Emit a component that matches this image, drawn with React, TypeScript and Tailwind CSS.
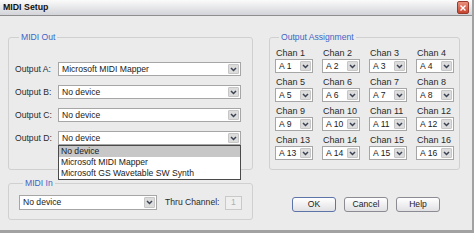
import clsx from "clsx";

// MIDI Setup dialog — XP-ish window with MIDI Out / MIDI In groups,
// the 16-channel output assignment grid and OK / Cancel / Help.

const outputs = [
  { label: "Output A:", value: "Microsoft MIDI Mapper" },
  { label: "Output B:", value: "No device" },
  { label: "Output C:", value: "No device" },
  { label: "Output D:", value: "No device" },
];

const devices = ["No device", "Microsoft MIDI Mapper", "Microsoft GS Wavetable SW Synth"];

const channels = Array.from({ length: 16 }, (_, i) => i + 1);

function Chevron() {
  return (
    <svg width="7" height="5" viewBox="0 0 7 5">
      <path d="M1 1l2.5 2.5L6 1" stroke="#3b4253" strokeWidth="1.5" fill="none" />
    </svg>
  );
}

function Select({ value, className }: { value: string; className?: string }) {
  return (
    <div className={clsx("flex h-[14px] items-stretch border border-[#a6a6a6] bg-white", className)}>
      <span className="flex-1 truncate pl-[3px] leading-[12px] text-[#1a1a1a]">{value}</span>
      <span className="m-px flex w-[11px] items-center justify-center rounded-[1px] border border-[#c6c6c6] bg-[#dcdcdc]">
        <Chevron />
      </span>
    </div>
  );
}

function Button({ label, primary }: { label: string; primary?: boolean }) {
  return (
    <button
      className={clsx(
        "h-[15px] w-[44px] rounded-[3px] border bg-gradient-to-b from-[#ffffff] to-[#e1e1e4] leading-[13px] text-[#222]",
        primary ? "border-[#5d74a9]" : "border-[#8b8b94]"
      )}
    >
      {label}
    </button>
  );
}

export default function App() {
  return (
    <div className="h-[233px] w-[474px] bg-[#a2a2a2] font-['Liberation_Sans',Arial,sans-serif] text-[8.6px]">
      <div className="flex h-[230px] w-[472px] flex-col bg-[#ebebeb]">
        {/* title bar */}
        <div className="flex h-[16px] items-center justify-between border-b border-[#8e8e8e] bg-gradient-to-b from-[#fbfbfb] to-[#d3d4d9] pl-[3px] pr-[3px]">
          <span className="text-[8.8px] font-bold text-[#111]">MIDI Setup</span>
          <span className="flex h-[13px] w-[12px] items-center justify-center rounded-[2px] border border-[#9a3a2c] bg-gradient-to-b from-[#e9907c] to-[#c8432e]">
            <svg width="6" height="6" viewBox="0 0 6 6">
              <path d="M0.5 0.5l5 5M5.5 0.5l-5 5" stroke="#fff" strokeWidth="1.4" />
            </svg>
          </span>
        </div>

        <div className="flex gap-[16px] px-[8px]">
          {/* left column */}
          <div className="flex w-[245px] flex-col">
            <fieldset className="mt-[15px] rounded-[3px] border border-[#d0d0d0] pb-[24px] pl-[6px] pt-[19px]">
              <legend className="ml-[4px] px-[2px] leading-[12px] text-[#4064c6]">MIDI Out</legend>
              <div className="flex flex-col gap-[9px]">
                {outputs.map((o, i) => (
                  <div key={o.label} className="flex items-center">
                    <span className="w-[43px] text-[#2a2a2a]">{o.label}</span>
                    <div className="relative">
                      <Select value={o.value} className="w-[183px]" />
                      {i === 3 && (
                        <div className="absolute left-0 top-full z-10 w-[183px] border border-[#4a4a4a] bg-white">
                          {devices.map((d, j) => (
                            <div
                              key={d}
                              className={clsx(
                                "h-[11px] pl-[2px] leading-[11px] text-[#1a1a1a]",
                                j === 0 && "bg-[#c7c7c7]"
                              )}
                            >
                              {d}
                            </div>
                          ))}
                        </div>
                      )}
                    </div>
                  </div>
                ))}
              </div>
            </fieldset>

            <fieldset className="mt-[7px] rounded-[3px] border border-[#d0d0d0] pb-[9px] pl-[10px] pr-[10px] pt-[6px]">
              <legend className="ml-[4px] px-[2px] leading-[12px] text-[#4064c6]">MIDI In</legend>
              <div className="flex items-center">
                <Select value="No device" className="h-[15px] w-[138px]" />
                <span className="ml-[8px] text-[#2a2a2a]">Thru Channel:</span>
                <span className="ml-auto flex h-[14px] w-[17px] items-center justify-center border border-[#c9c9c9] bg-[#efefef] text-[#b0b0b0]">
                  1
                </span>
              </div>
            </fieldset>
          </div>

          {/* right column */}
          <div className="flex w-[191px] flex-col">
            <fieldset className="mt-[15px] rounded-[3px] border border-[#d0d0d0] pb-[9px] pl-[5px] pr-[5px] pt-[5px]">
              <legend className="ml-[4px] px-[2px] leading-[12px] text-[#4064c6]">Output Assignment</legend>
              <div className="grid grid-cols-4 gap-x-[9px] gap-y-[4px]">
                {channels.map((c) => (
                  <div key={c} className="flex flex-col gap-[1px]">
                    <span className="pl-px text-[9px] leading-[10px] text-[#2a2a2a]">Chan {c}</span>
                    <Select value={`A ${c}`} className="w-[38px]" />
                  </div>
                ))}
              </div>
            </fieldset>

            <div className="mt-[27px] flex gap-[8px] pl-[23px]">
              <Button label="OK" primary />
              <Button label="Cancel" />
              <Button label="Help" />
            </div>
          </div>
        </div>
      </div>
    </div>
  );
}
